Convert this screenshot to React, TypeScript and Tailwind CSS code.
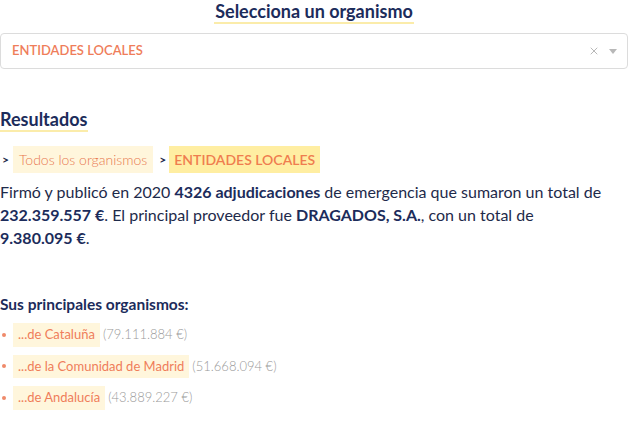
import { X } from 'lucide-react';

const organismos = [
	{ name: '...de Cataluña', total: '(79.111.884 €)' },
	{ name: '...de la Comunidad de Madrid', total: '(51.668.094 €)' },
	{ name: '...de Andalucía', total: '(43.889.227 €)' },
];

export default function App() {
	return (
		<div className="min-h-[440px] w-[640px] bg-white pr-3 font-['Lato',sans-serif] text-[#1e2a4a]">
			<div className="flex justify-center">
				<h2 className="border-b-2 border-[#fbecaa] px-[1px] text-[18px] leading-[22px] font-bold text-[#1c2c5b]">
					Selecciona un organismo
				</h2>
			</div>

			<div className="mt-[9px] flex h-[36px] items-center rounded-[4px] border border-[#dcdcdc] pr-[10px] pl-[11px]">
				<span className="flex-1 text-[13px] font-semibold text-[#ef7d5a]">ENTIDADES LOCALES</span>
				<X className="h-[12px] w-[12px] text-[#b8b8b8]" strokeWidth={2} />
				<span className="ml-[9px] h-0 w-0 border-x-[4px] border-t-[5px] border-x-transparent border-t-[#b8b8b8]" />
			</div>

			<div className="mt-[39px] flex">
				<h3 className="border-b-2 border-[#fbecaa] pr-[1px] text-[18px] leading-[22px] font-bold text-[#1c2c5b]">
					Resultados
				</h3>
			</div>

			<div className="mt-[14px] flex items-center text-[14px]">
				<span className="pl-[2px] text-[12px] font-bold">&gt;</span>
				<span className="ml-[4px] bg-[#fff6dc] px-[6px] py-[3px] font-light text-[#e8764f]">Todos los organismos</span>
				<span className="ml-[6px] text-[12px] font-bold">&gt;</span>
				<span className="ml-[3px] bg-[#ffeea2] px-[5px] py-[3px] font-semibold text-[#ef7d4f]">ENTIDADES LOCALES</span>
			</div>

			<p className="mt-[7px] pr-[14px] text-[16px] leading-[23px] text-[#1e2a4a]">
				Firmó y publicó en 2020 <b className="font-bold text-[#1c2c5b]">4326 adjudicaciones</b> de emergencia que sumaron un total de{' '}
				<b className="font-bold whitespace-nowrap text-[#1c2c5b]">232.359.557 €</b>. El principal proveedor fue{' '}
				<b className="font-bold text-[#1c2c5b]">DRAGADOS, S.A.</b>, con un total de{' '}
				<span className="whitespace-nowrap">
					<b className="font-bold text-[#1c2c5b]">9.380.095 €</b>.
				</span>
			</p>

			<h4 className="mt-[45px] text-[15.5px] leading-[20px] font-bold text-[#1c2c5b]">Sus principales organismos:</h4>

			<ul className="mt-[9px] flex flex-col gap-[8px]">
				{organismos.map((o) => (
					<li key={o.name} className="flex items-center text-[13px]">
						<span className="mr-[7px] ml-[2px] h-[4px] w-[4px] rounded-full bg-[#ef8a6a]" />
						<span className="bg-[#fff6dc] px-[5px] py-[2px] text-[#ef7d5a]">{o.name}</span>
						<span className="ml-[3px] font-light text-[#9a9a9a]">{o.total}</span>
					</li>
				))}
			</ul>
		</div>
	);
}
